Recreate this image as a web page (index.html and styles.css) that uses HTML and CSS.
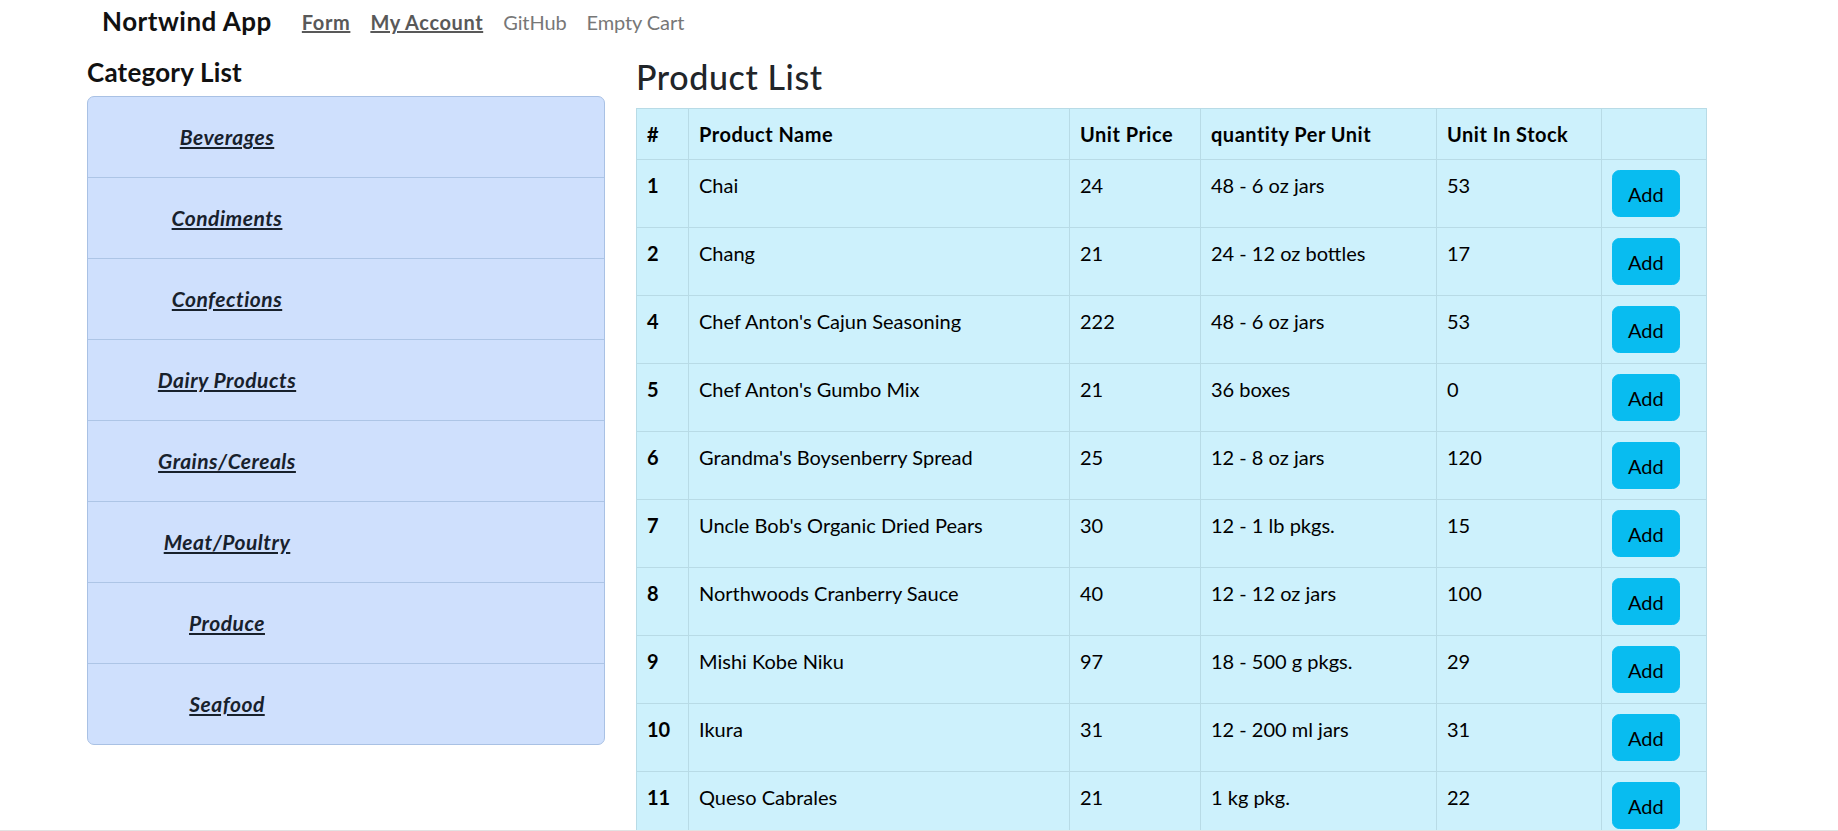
FILE: index.html
```html
<!DOCTYPE html>
<html lang="en">
<head>
<meta charset="utf-8">
<title>Nortwind App</title>
<link rel="stylesheet" href="styles.css">
</head>
<body>
<div class="page">
  <nav class="navbar">
    <span class="brand">Nortwind App</span>
    <a class="nav-link strong" href="#">Form</a>
    <a class="nav-link strong" href="#">My Account</a>
    <span class="nav-link muted">GitHub</span>
    <span class="nav-link muted">Empty Cart</span>
  </nav>
  <div class="main">
    <aside class="categories">
      <h5 class="cat-title">Category List</h5>
      <ul class="cat-list">
        <li class="cat-item"><div class="cat-inner"><a href="#">Beverages</a></div></li>
        <li class="cat-item"><div class="cat-inner"><a href="#">Condiments</a></div></li>
        <li class="cat-item"><div class="cat-inner"><a href="#">Confections</a></div></li>
        <li class="cat-item"><div class="cat-inner"><a href="#">Dairy Products</a></div></li>
        <li class="cat-item"><div class="cat-inner"><a href="#">Grains/Cereals</a></div></li>
        <li class="cat-item"><div class="cat-inner"><a href="#">Meat/Poultry</a></div></li>
        <li class="cat-item"><div class="cat-inner"><a href="#">Produce</a></div></li>
        <li class="cat-item"><div class="cat-inner"><a href="#">Seafood</a></div></li>
      </ul>
    </aside>
    <section class="products">
      <h3 class="prod-title">Product List</h3>
      <table class="prod-table">
        <colgroup>
          <col class="c-num"><col class="c-name"><col class="c-price"><col class="c-qty"><col class="c-stock"><col class="c-btn">
        </colgroup>
        <thead>
          <tr><th>#</th><th>Product Name</th><th>Unit Price</th><th>quantity Per Unit</th><th>Unit In Stock</th><th></th></tr>
        </thead>
        <tbody>
          <tr><th>1</th><td>Chai</td><td>24</td><td>48 - 6 oz jars</td><td>53</td><td><button class="btn-add">Add</button></td></tr>
          <tr><th>2</th><td>Chang</td><td>21</td><td>24 - 12 oz bottles</td><td>17</td><td><button class="btn-add">Add</button></td></tr>
          <tr><th>4</th><td>Chef Anton's Cajun Seasoning</td><td>222</td><td>48 - 6 oz jars</td><td>53</td><td><button class="btn-add">Add</button></td></tr>
          <tr><th>5</th><td>Chef Anton's Gumbo Mix</td><td>21</td><td>36 boxes</td><td>0</td><td><button class="btn-add">Add</button></td></tr>
          <tr><th>6</th><td>Grandma's Boysenberry Spread</td><td>25</td><td>12 - 8 oz jars</td><td>120</td><td><button class="btn-add">Add</button></td></tr>
          <tr><th>7</th><td>Uncle Bob's Organic Dried Pears</td><td>30</td><td>12 - 1 lb pkgs.</td><td>15</td><td><button class="btn-add">Add</button></td></tr>
          <tr><th>8</th><td>Northwoods Cranberry Sauce</td><td>40</td><td>12 - 12 oz jars</td><td>100</td><td><button class="btn-add">Add</button></td></tr>
          <tr><th>9</th><td>Mishi Kobe Niku</td><td>97</td><td>18 - 500 g pkgs.</td><td>29</td><td><button class="btn-add">Add</button></td></tr>
          <tr><th>10</th><td>Ikura</td><td>31</td><td>12 - 200 ml jars</td><td>31</td><td><button class="btn-add">Add</button></td></tr>
          <tr><th>11</th><td>Queso Cabrales</td><td>21</td><td>1 kg pkg.</td><td>22</td><td><button class="btn-add">Add</button></td></tr>
        </tbody>
      </table>
    </section>
  </div>
  <div class="bottom-line"></div>
</div>
</body>
</html>
```

FILE: styles.css
```css
html, body {
  margin: 0;
  padding: 0;
  background: #fff;
}
body {
  font-family: Lato, "Open Sans", sans-serif;
  font-size: 20px;
  line-height: 1.5;
  color: #212529;
}
.page {
  height: 831px;
  overflow: hidden;
}
.navbar {
  height: 44px;
  display: flex;
  align-items: center;
  padding-left: 102px;
}
.brand {
  font-size: 26px;
  font-weight: 700;
  line-height: 37.5px;
  color: #111;
  margin-right: 20px;
  letter-spacing: 0.5px;
}
.nav-link {
  padding: 0 10px;
  font-size: 20px;
  line-height: 30px;
}
.nav-link.strong {
  color: #595959;
  font-weight: 700;
  text-decoration: underline;
  letter-spacing: 0.6px;
}
.nav-link.muted {
  color: #777;
  letter-spacing: -0.1px;
}
.main {
  display: flex;
  padding-left: 87px;
  gap: 31px;
  align-items: flex-start;
}
.categories {
  width: 518px;
}
.cat-title {
  margin: 13px 0 9px;
  font-size: 26px;
  font-weight: 700;
  line-height: 30px;
  color: #111;
  letter-spacing: 0.2px;
}
.cat-list {
  list-style: none;
  margin: 0;
  padding: 0;
  background: #cfe0fd;
  border: 1px solid #a9c1e4;
  border-radius: 7px;
  overflow: hidden;
}
.cat-item {
  padding: 25px 0;
  border-top: 1px solid #adc5e6;
}
.cat-item:first-child {
  border-top: 0;
}
.cat-inner {
  width: 278px;
  text-align: center;
  line-height: 30px;
}
.cat-inner a {
  color: #18212c;
  font-weight: 700;
  font-style: italic;
  text-decoration: underline;
  font-size: 21px;
  letter-spacing: 0.5px;
}
.products {
  width: 1070px;
}
.prod-title {
  margin: 14px 0 12px;
  font-size: 34px;
  font-weight: 500;
  line-height: 38.4px;
  color: #212529;
  letter-spacing: 0.6px;
}
.prod-table {
  width: 1070px;
  table-layout: fixed;
  border-collapse: collapse;
  background: #cdf1fc;
  color: #000;
}
.c-num { width: 52px; }
.c-name { width: 381px; }
.c-price { width: 131px; }
.c-qty { width: 236px; }
.c-stock { width: 165px; }
.c-btn { width: 105px; }
.prod-table th,
.prod-table td {
  border: 1px solid #b8dbe6;
  padding: 10px;
  text-align: left;
  vertical-align: top;
  line-height: 30px;
  font-size: 20px;
}
.prod-table th {
  font-weight: 700;
}
.prod-table thead th {
  letter-spacing: 0.5px;
}
.prod-table td {
  font-weight: 400;
}
.btn-add {
  display: block;
  font-family: inherit;
  font-size: 20px;
  line-height: 30px;
  padding: 7.5px 15px;
  border: 1px solid #08bcf0;
  border-radius: 7.5px;
  background: #08bcf0;
  color: #000;
}
.bottom-line {
  position: fixed;
  left: 0;
  right: 0;
  bottom: 0;
  height: 1px;
  background: #e2e2e2;
}
```
